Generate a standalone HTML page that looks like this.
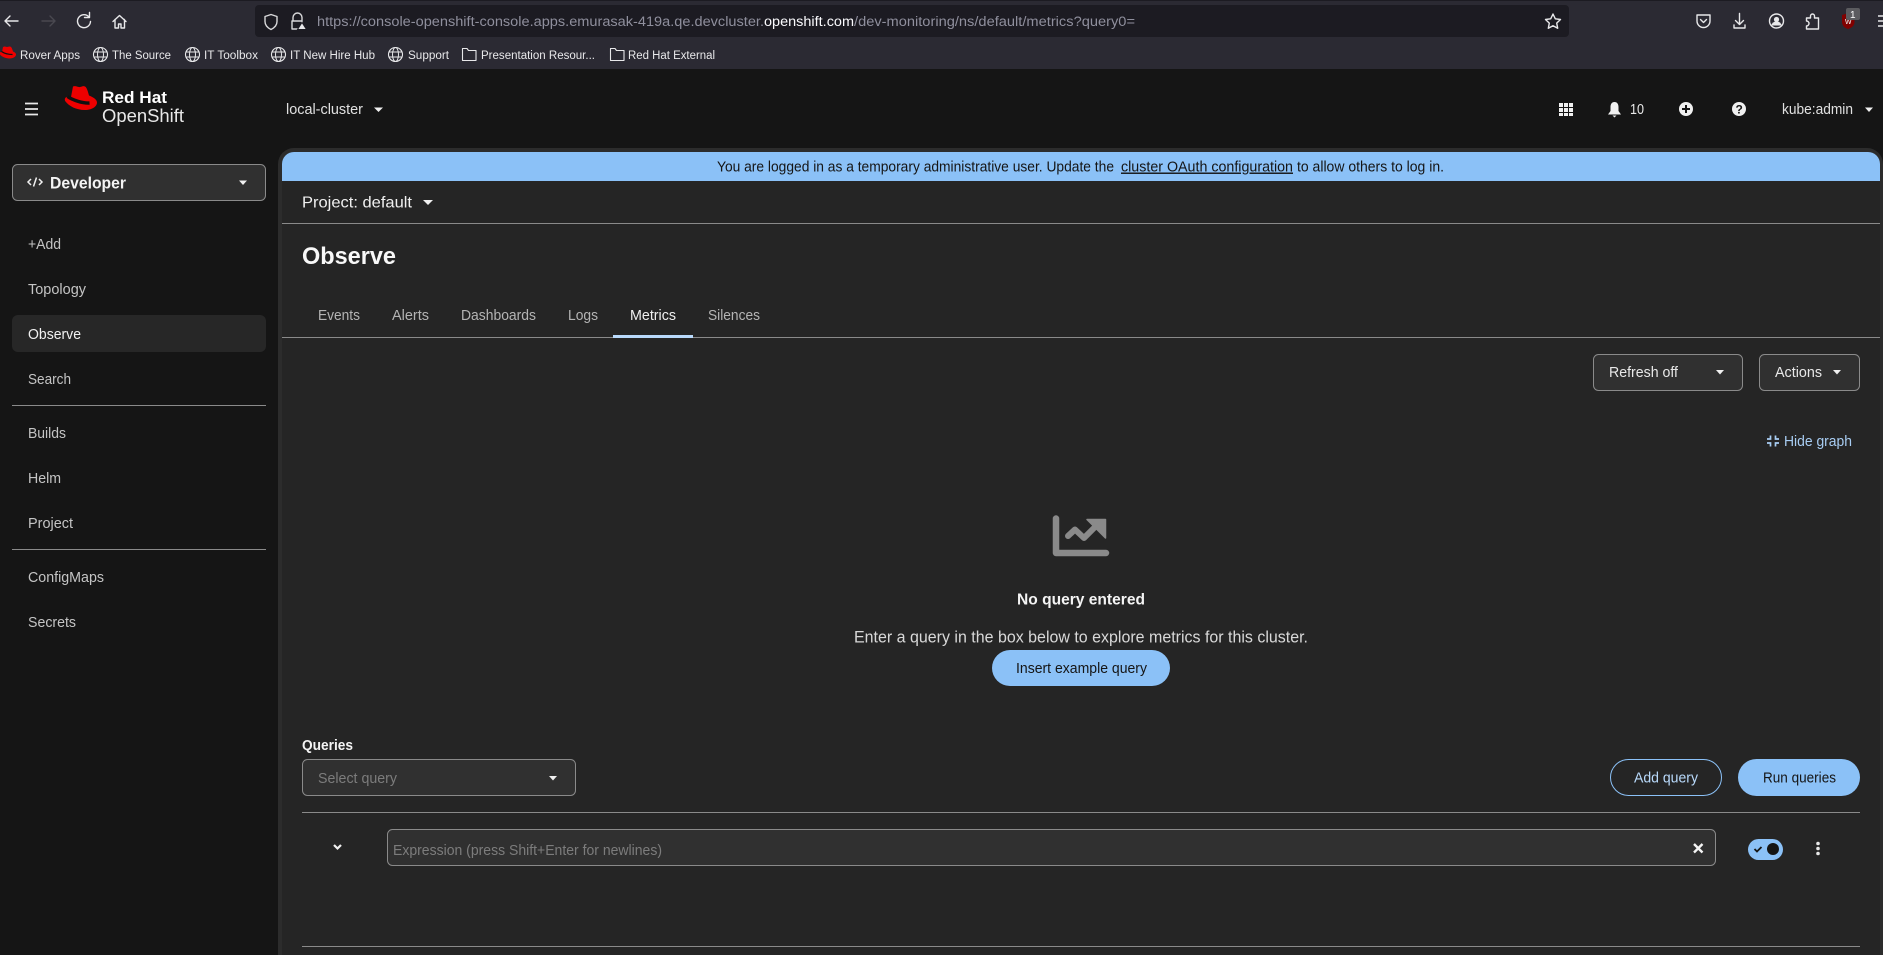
<!DOCTYPE html>
<html lang="en"><head><meta charset="utf-8"><title>Metrics · Red Hat OpenShift</title>
<style>
html,body{margin:0;padding:0;background:#151515;width:1883px;height:955px;overflow:hidden}
svg{display:block;position:absolute;left:0;top:0}
text{font-family:"Liberation Sans",sans-serif;font-size:14.4px;fill:#d2d2d2;dominant-baseline:auto}
.b{font-size:11.5px;fill:#e8e8ea}
.u{font-size:13.5px;fill:#8f8f9d}
.n{fill:#c4c4c4;font-size:14.4px}
.w{fill:#f0f0f0}
.ic{fill:none;stroke:#e8e8ea;stroke-width:1.4;stroke-linecap:round;stroke-linejoin:round}
</style></head><body>
<svg width="1883" height="955" viewBox="0 0 1883 955" xmlns="http://www.w3.org/2000/svg">
<defs><clipPath id="p"><path d="M282 181V164a12 12 0 0 1 12-12H1868a12 12 0 0 1 12 12V955H282Z"/></clipPath></defs>
<!-- browser chrome -->
<rect width="1883" height="69" fill="#2b2a33"/>
<rect width="1883" height="1" fill="#1c1b22"/>
<rect x="255" y="5" width="1314" height="32" rx="4" fill="#1c1b22"/>
<path class="ic" d="M5 21H18M5 21l5-5M5 21l5 5"/>
<path class="ic" stroke-opacity=".4" style="stroke:#77767e" d="M55 21H42M55 21l-5-5M55 21l-5 5"/>
<path class="ic" d="M89 17a6.500 6.500 0 1 0 1.500 4.500M89.500 12.500V17.500H84.500"/>
<path class="ic" d="M113 21.500l6.500-6 6.500 6M115 19.500V28h3.500v-4h2.500v4h3.500v-8.500"/>
<path class="ic" d="M271 14.500l6 2v5c0 4-3 6.500-6 8-3-1.500-6-4-6-8v-5Z" style="stroke:#d8d8da"/>
<path class="ic" d="M293 21v-3.500a4.500 4.500 0 0 1 9 0V21M292 21h10v8h-10Z" style="stroke:#d8d8da"/>
<path d="M302 22.500l4.500 7h-9Z" fill="#e8e8ea" stroke="#1c1b22" stroke-width="1"/>
<text class="u" x="317" y="26" textLength="447" lengthAdjust="spacingAndGlyphs">https://console-openshift-console.apps.emurasak-419a.qe.devcluster.</text>
<text class="u" x="764" y="26" textLength="90" lengthAdjust="spacingAndGlyphs" style="fill:#fbfbfe">openshift.com</text>
<text class="u" x="854" y="26" textLength="281" lengthAdjust="spacingAndGlyphs">/dev-monitoring/ns/default/metrics?query0=</text>
<path class="ic" d="M1553 14l2.300 4.800 5.200.7-3.800 3.600 1 5.200-4.700-2.600-4.700 2.600 1-5.200-3.800-3.600 5.200-.7Z"/>
<path class="ic" d="M1697 15h13v6a6.500 6.500 0 0 1-13 0ZM1700.500 19.500l3 3 3-3"/>
<path class="ic" d="M1739.500 13.500V24M1735.500 20.500l4 4 4-4M1734 25v3h11v-3"/>
<circle class="ic" cx="1776.500" cy="21" r="7"/><circle cx="1776.500" cy="19.500" r="2.600" fill="#e8e8ea"/><path d="M1771.500 25.500a5 4 0 0 1 10 0Z" fill="#e8e8ea"/>
<path class="ic" d="M1806.500 18h4v-2a2 2 0 0 1 4 0v2h4v11h-12v-3a2.500 2.500 0 0 0 0-5Z"/>
<path d="M1842 15l6.500-2 6 2v7c0 3.500-3 6-6.500 7-3.500-1-6-3.500-6-7Z" fill="#800000"/>
<text x="1845" y="24" style="font-size:9px;fill:#eee">w</text>
<rect x="1846" y="8" width="14" height="12" rx="2" fill="#5b5b5f"/><text x="1850" y="18" style="font-size:10px;fill:#fff">1</text>
<path d="M1878 16h5M1878 21h5M1878 26h5" stroke="#e8e8ea" stroke-width="1.4"/>
<!-- bookmarks -->
<path d="M3 47c2-1 3 0 4 0s3-1 4 0 1.500 3 2 4.500c1.500.7 3 1.500 3 3 0 2-2.500 4-6.500 4-4 0-8-2-9.500-4-.8-1-.3-2.500 1-2.500h1Z" fill="#e00"/><path d="M1.500 51.500c3 2 7 3 11 3" stroke="#111" stroke-width="1.300" fill="none"/>
<text class="b" x="20" y="59" textLength="60" lengthAdjust="spacingAndGlyphs">Rover Apps</text>
<g id="gl"><circle class="ic" cx="100.500" cy="54.500" r="7" style="stroke-width:1.1"/><ellipse class="ic" cx="100.500" cy="54.500" rx="3" ry="7" style="stroke-width:1"/><path class="ic" d="M94 52h13M94 57h13" style="stroke-width:1"/></g>
<text class="b" x="112" y="59" textLength="59" lengthAdjust="spacingAndGlyphs">The Source</text>
<use href="#gl" x="92"/><text class="b" x="204" y="59" textLength="54" lengthAdjust="spacingAndGlyphs">IT Toolbox</text>
<use href="#gl" x="178"/><text class="b" x="290" y="59" textLength="85" lengthAdjust="spacingAndGlyphs">IT New Hire Hub</text>
<use href="#gl" x="295"/><text class="b" x="408" y="59" textLength="41" lengthAdjust="spacingAndGlyphs">Support</text>
<path id="fo" class="ic" d="M462.500 48.500h4.500l1.500 2h7.500v10h-13.500Z" style="stroke-width:1.100"/>
<text class="b" x="481" y="59" textLength="114" lengthAdjust="spacingAndGlyphs">Presentation Resour...</text>
<use href="#fo" x="148"/><text class="b" x="628" y="59" textLength="87" lengthAdjust="spacingAndGlyphs">Red Hat External</text>
<!-- masthead -->
<rect y="69" width="1883" height="886" fill="#151515"/>
<path d="M25 103.500h13M25 109h13M25 114.500h13" stroke="#e8e8e8" stroke-width="1.700"/>
<path d="M73 86.500c2.500-1 4.500.6 6.500.6s3.500-1.600 5.500-.6c2 1 3 5.500 4 9 3 1.300 8 3.500 8 7 0 4-5 7.500-12 7.500-9 0-16-4-19.500-8.500-1.300-1.700-.6-4 1.200-4.500 1.500-.4 3-.2 4.300 0Z" fill="#e00"/>
<path d="M67.500 96.500c5 3.500 15 7 22 6.500" stroke="#111" stroke-width="3.400" fill="none"/>
<text x="102" y="103" textLength="65" lengthAdjust="spacingAndGlyphs" style="font-weight:700;font-size:17px;fill:#fff">Red Hat</text>
<text x="102" y="122" textLength="82" lengthAdjust="spacingAndGlyphs" style="font-size:18px;fill:#e8e8e8">OpenShift</text>
<text x="286" y="114" textLength="77" lengthAdjust="spacingAndGlyphs" class="w" style="font-size:14.4px;fill:#e0e0e0">local-cluster</text>
<path id="ca" d="M374 107.500h9l-4.500 4.500Z" fill="#f0f0f0"/>
<g fill="#f0f0f0"><path d="M1559 103h4v4h-4zM1564 103h4v4h-4zM1569 103h4v4h-4zM1559 108h4v4h-4zM1564 108h4v4h-4zM1569 108h4v4h-4zM1559 113h4v3h-4zM1564 113h4v3h-4zM1569 113h4v3h-4z"/></g>
<path d="M1614.500 102c2.800 0 4 2.300 4 5v4l2.500 3.500h-13l2.500-3.500v-4c0-2.700 1.200-5 4-5ZM1612.500 115.500h4l-2 2Z" fill="#f0f0f0"/>
<text x="1630" y="114" textLength="14" lengthAdjust="spacingAndGlyphs" style="fill:#e8e8e8">10</text>
<circle cx="1686" cy="109" r="7" fill="#f0f0f0"/><path d="M1686 105v8M1682 109h8" stroke="#151515" stroke-width="2"/>
<circle cx="1739" cy="109" r="7" fill="#f0f0f0"/><text x="1735.500" y="113.500" style="font-size:12px;font-weight:700;fill:#151515">?</text>
<text x="1782" y="114" textLength="71" lengthAdjust="spacingAndGlyphs" style="fill:#e0e0e0">kube:admin</text>
<path d="M1865 107.500h8l-4 4.500Z" fill="#f0f0f0"/>
<!-- sidebar -->
<rect x="12.500" y="164.500" width="253" height="36" rx="5" fill="#303030" stroke="#8a8a8a"/>
<path d="M31 179l-3 3 3 3M39 179l3 3-3 3M36.500 177.500l-3 9" stroke="#f0f0f0" stroke-width="1.500" fill="none"/>
<text x="50" y="188.500" textLength="76" lengthAdjust="spacingAndGlyphs" style="font-size:17px;font-weight:700;fill:#f4f4f4">Developer</text>
<path d="M239 180.500h8l-4 4.500Z" fill="#f0f0f0"/>
<text class="n" x="28" y="249" textLength="33" lengthAdjust="spacingAndGlyphs">+Add</text>
<text class="n" x="28" y="294" textLength="58" lengthAdjust="spacingAndGlyphs">Topology</text>
<rect x="12" y="315" width="254" height="37" rx="6" fill="#272727"/>
<text class="n" x="28" y="339" textLength="53" lengthAdjust="spacingAndGlyphs" style="fill:#f0f0f0">Observe</text>
<text class="n" x="28" y="384" textLength="43" lengthAdjust="spacingAndGlyphs">Search</text>
<rect x="12" y="405" width="254" height="1" fill="#8a8a8a"/>
<text class="n" x="28" y="438" textLength="38" lengthAdjust="spacingAndGlyphs">Builds</text>
<text class="n" x="28" y="483" textLength="33" lengthAdjust="spacingAndGlyphs">Helm</text>
<text class="n" x="28" y="528" textLength="45" lengthAdjust="spacingAndGlyphs">Project</text>
<rect x="12" y="549" width="254" height="1" fill="#8a8a8a"/>
<text class="n" x="28" y="582" textLength="76" lengthAdjust="spacingAndGlyphs">ConfigMaps</text>
<text class="n" x="28" y="627" textLength="48" lengthAdjust="spacingAndGlyphs">Secrets</text>
<!-- main panel -->
<path d="M278 955V164a16 16 0 0 1 16-16H1867a16 16 0 0 1 16 16V955Z" fill="#2c2c2c"/>
<g clip-path="url(#p)">
<rect x="282" y="152" width="1598" height="803" fill="#252525"/>
<rect x="282" y="152" width="1598" height="29" fill="#8bc1f7"/>
</g>
<text x="717" y="171.500" textLength="397" lengthAdjust="spacingAndGlyphs" style="fill:#151515">You are logged in as a temporary administrative user. Update the</text>
<text x="1121" y="171.500" textLength="172" lengthAdjust="spacingAndGlyphs" style="fill:#151515;text-decoration:underline">cluster OAuth configuration</text>
<text x="1297" y="171.500" textLength="147" lengthAdjust="spacingAndGlyphs" style="fill:#151515">to allow others to log in.</text>
<text x="302" y="207.500" textLength="110" lengthAdjust="spacingAndGlyphs" style="font-size:16px;fill:#f0f0f0">Project: default</text>
<path d="M423 200h10l-5 5Z" fill="#f0f0f0"/>
<rect x="282" y="223" width="1598" height="1" fill="#8a8a8a"/>
<text x="302" y="264" textLength="94" lengthAdjust="spacingAndGlyphs" style="font-size:24px;font-weight:700;fill:#f8f8f8">Observe</text>
<g>
<text class="n" x="318" y="320" textLength="42" lengthAdjust="spacingAndGlyphs" style="fill:#b4b4b4">Events</text>
<text class="n" x="392" y="320" textLength="37" lengthAdjust="spacingAndGlyphs" style="fill:#b4b4b4">Alerts</text>
<text class="n" x="461" y="320" textLength="75" lengthAdjust="spacingAndGlyphs" style="fill:#b4b4b4">Dashboards</text>
<text class="n" x="568" y="320" textLength="30" lengthAdjust="spacingAndGlyphs" style="fill:#b4b4b4">Logs</text>
<text class="n" x="630" y="320" textLength="46" lengthAdjust="spacingAndGlyphs" style="fill:#f0f0f0">Metrics</text>
<text class="n" x="708" y="320" textLength="52" lengthAdjust="spacingAndGlyphs" style="fill:#b4b4b4">Silences</text>
</g>
<rect x="282" y="337" width="1598" height="1" fill="#8a8a8a"/>
<rect x="613" y="335" width="80" height="3" fill="#b9dafc"/>
<rect x="1593.500" y="354.500" width="149" height="36" rx="5" fill="#303030" stroke="#8a8a8a"/>
<text x="1609" y="377" textLength="69" lengthAdjust="spacingAndGlyphs" style="fill:#e8e8e8">Refresh off</text>
<path d="M1716 370h8l-4 4.500Z" fill="#f0f0f0"/>
<rect x="1759.500" y="354.500" width="100" height="36" rx="5" fill="#303030" stroke="#8a8a8a"/>
<text x="1775" y="377" textLength="47" lengthAdjust="spacingAndGlyphs" style="fill:#e8e8e8">Actions</text>
<path d="M1833 370h8l-4 4.500Z" fill="#f0f0f0"/>
<path d="M1767 439h3.500v-3.500M1775.500 435.500v3.500h3.500M1767 443h3.500v3.500M1775.500 446.500v-3.500h3.500" stroke="#a8cdf3" stroke-width="1.700" fill="none"/>
<text x="1784" y="446" textLength="68" lengthAdjust="spacingAndGlyphs" style="fill:#a8cdf3">Hide graph</text>
<!-- empty state -->
<path d="M1056 518.500V553H1106" stroke="#8a8a8a" stroke-width="6.500" fill="none" stroke-linecap="round" stroke-linejoin="round"/>
<path d="M1068 536l7-6.500 9 8.500 13-13" stroke="#8a8a8a" stroke-width="6" fill="none" stroke-linecap="round" stroke-linejoin="round"/>
<path d="M1087 519.500h18.500v18.500Z" fill="#8a8a8a" stroke="#8a8a8a" stroke-width="1.500" stroke-linejoin="round"/>
<text x="1017" y="604.500" textLength="128" lengthAdjust="spacingAndGlyphs" style="font-size:16px;font-weight:700;fill:#f4f4f4">No query entered</text>
<text x="854" y="642.500" textLength="454" lengthAdjust="spacingAndGlyphs" style="font-size:16.500px;fill:#d8d8d8">Enter a query in the box below to explore metrics for this cluster.</text>
<rect x="992" y="650" width="178" height="36" rx="18" fill="#8bc1f7"/>
<text x="1016" y="673" textLength="131" lengthAdjust="spacingAndGlyphs" style="fill:#151515">Insert example query</text>
<!-- queries -->
<text x="302" y="750" textLength="51" lengthAdjust="spacingAndGlyphs" style="font-weight:700;fill:#f4f4f4">Queries</text>
<rect x="302.500" y="759.500" width="273" height="36" rx="5" fill="#303030" stroke="#8a8a8a"/>
<text x="318" y="783" textLength="79" lengthAdjust="spacingAndGlyphs" style="fill:#7c7c7c">Select query</text>
<path d="M549 776h8l-4 4.500Z" fill="#f0f0f0"/>
<rect x="1610.500" y="759.500" width="111" height="36" rx="18" fill="none" stroke="#8bc1f7"/>
<text x="1634" y="782.500" textLength="64" lengthAdjust="spacingAndGlyphs" style="fill:#b9dafc">Add query</text>
<rect x="1738" y="759" width="122" height="37" rx="18.500" fill="#8bc1f7"/>
<text x="1763" y="782.500" textLength="73" lengthAdjust="spacingAndGlyphs" style="fill:#151515">Run queries</text>
<rect x="302" y="812" width="1558" height="1" fill="#8a8a8a"/>
<path d="M334 845l3.500 3.500 3.500-3.500" stroke="#f0f0f0" stroke-width="2.200" fill="none"/>
<rect x="387.500" y="829.500" width="1328" height="36" rx="5" fill="#303030" stroke="#8a8a8a"/>
<text x="393" y="855" textLength="269" lengthAdjust="spacingAndGlyphs" style="fill:#7c7c7c">Expression (press Shift+Enter for newlines)</text>
<path d="M1694 844l8.500 8.500M1702.500 844l-8.500 8.500" stroke="#f4f4f4" stroke-width="2.400"/>
<rect x="1748" y="839" width="35" height="21" rx="10.500" fill="#8bc1f7"/>
<circle cx="1773" cy="849" r="6" fill="#151515"/>
<path d="M1754.500 849l2.500 2.500 4.500-4.500" stroke="#151515" stroke-width="1.800" fill="none"/>
<circle cx="1818" cy="843.500" r="1.800" fill="#e8e8e8"/><circle cx="1818" cy="848.500" r="1.800" fill="#e8e8e8"/><circle cx="1818" cy="853.500" r="1.800" fill="#e8e8e8"/>
<rect x="302" y="946" width="1558" height="1" fill="#8a8a8a"/>
</svg>
</body></html>
